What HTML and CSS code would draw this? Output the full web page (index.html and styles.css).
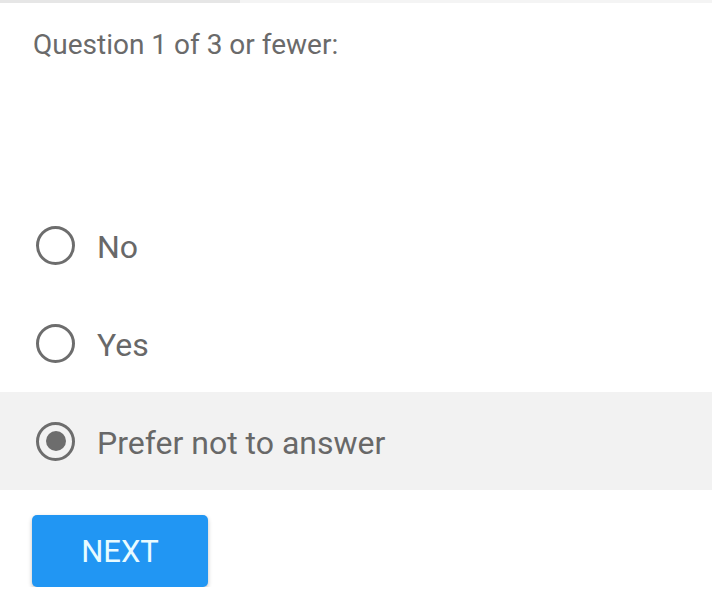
FILE: index.html
```html
<!DOCTYPE html>
<html>
<head>
<meta charset="utf-8">
<link rel="stylesheet" href="styles.css">
</head>
<body>
<div class="progress"><div class="progress-fill"></div></div>
<div class="question">Question 1 of 3 or fewer:</div>
<div class="options">
  <label class="option">
    <span class="radio"></span>
    <span class="label">No</span>
  </label>
  <label class="option">
    <span class="radio"></span>
    <span class="label">Yes</span>
  </label>
  <label class="option selected">
    <span class="radio"><span class="dot"></span></span>
    <span class="label">Prefer not to answer</span>
  </label>
</div>
<div class="actions">
  <button class="next">NEXT</button>
</div>
</body>
</html>
```
FILE: styles.css
```css
html, body {
  margin: 0;
  padding: 0;
  background: #ffffff;
  font-family: Roboto, "Liberation Sans", sans-serif;
  color: #666666;
}
.progress {
  height: 3px;
  background: #f4f4f4;
}
.progress-fill {
  width: 240px;
  height: 3px;
  background: #e6e6e6;
}
.question {
  padding: 26px 0 0 33px;
  font-size: 28px;
  line-height: 32px;
  height: 193px;
  box-sizing: border-box;
  color: #6a6a6a;
}
.options {
  display: flex;
  flex-direction: column;
}
.option {
  display: flex;
  align-items: center;
  height: 98px;
  padding-left: 36px;
  gap: 22px;
}
.option.selected {
  background: #f2f2f2;
}
.radio {
  width: 39px;
  height: 39px;
  box-sizing: border-box;
  border: 3.5px solid #6d6d6d;
  border-radius: 50%;
  display: flex;
  align-items: center;
  justify-content: center;
}
.dot {
  width: 20px;
  height: 20px;
  border-radius: 50%;
  background: #6d6d6d;
}
.label {
  font-size: 32px;
  color: #686868;
  padding-top: 4px;
}
.actions {
  padding: 25px 0 0 32px;
}
.next {
  width: 176px;
  height: 72px;
  border: none;
  border-radius: 5px;
  background: #2196f3;
  color: #e8fbff;
  font-family: Roboto, "Liberation Sans", sans-serif;
  font-size: 31px;
  box-shadow: 0 2px 4px rgba(0,0,0,0.25);
  padding: 0;
}
```
